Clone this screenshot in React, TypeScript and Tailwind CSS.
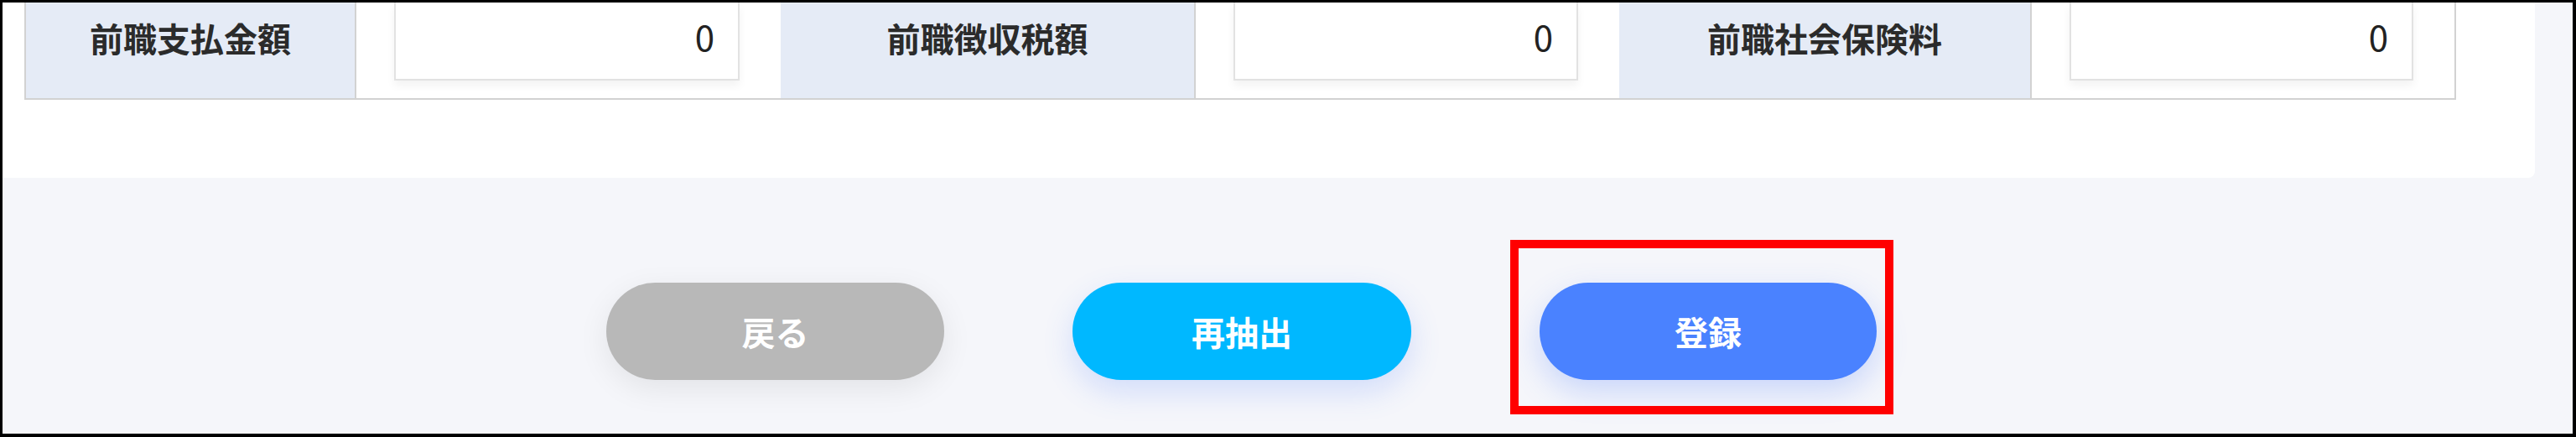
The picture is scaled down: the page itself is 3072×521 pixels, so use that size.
import React from 'react';

const FONT = "font-['Noto_Sans_CJK_JP',sans-serif]";

const rows = [
  { label: '前職支払金額', value: '0' },
  { label: '前職徴収税額', value: '0' },
  { label: '前職社会保険料', value: '0' },
];

const LabelCell: React.FC<{ text: string; first?: boolean }> = ({ text, first }) => (
  <div
    className={`h-full bg-[#e5ebf6] flex justify-center pt-[17px] border-r-2 border-[#d2d2d2] ${
      first ? 'border-l-2' : ''
    }`}
  >
    <span className="text-[40px] leading-[50px] font-bold text-[#2b2b2b]">{text}</span>
  </div>
);

const ValueCell: React.FC<{ value: string; last?: boolean }> = ({ value, last }) => (
  <div className={`h-full bg-white pl-[45px] pr-[49px] ${last ? 'border-r-2 border-[#d2d2d2]' : ''}`}>
    <div className="h-[93px] bg-white border-x-2 border-b-2 border-[#e2e2e2] shadow-[0_6px_10px_rgba(0,0,0,0.05)] flex justify-end pt-[12px] pr-[28px]">
      <span className="text-[42px] leading-[56px] text-[#222]">{value}</span>
    </div>
  </div>
);

export default function App() {
  return (
    <div
      className={`w-full h-[521px] overflow-hidden bg-[#f5f6fa] border-l-[3px] border-t-[3px] border-r-4 border-b-4 border-black flex flex-col ${FONT}`}
    >
      {/* card (top cropped) */}
      <div className="h-[209px] mr-[45px] bg-white rounded-br-lg pl-[26px] shrink-0">
        <div className="w-[2900px] h-[116px] grid grid-cols-[396px_506px_495px_505px_492px_506px] border-b-2 border-[#d2d2d2]">
          {rows.map((r, i) => (
            <React.Fragment key={r.label}>
              <LabelCell text={r.label} first={i === 0} />
              <ValueCell value={r.value} last={i === rows.length - 1} />
            </React.Fragment>
          ))}
        </div>
      </div>

      {/* buttons */}
      <div className="flex items-start gap-[153px] pl-[720px] pt-[125px]">
        <button className="w-[403px] h-[116px] rounded-full bg-[#b8b8b8] text-white text-[40px] font-bold shadow-[0_10px_36px_rgba(0,0,0,0.08)]">
          戻る
        </button>
        <button className="w-[404px] h-[116px] rounded-full bg-[#00b8ff] text-white text-[40px] font-bold shadow-[0_14px_36px_rgba(70,120,255,0.2)]">
          再抽出
        </button>
        <div className="relative">
          <button className="w-[402px] h-[116px] rounded-full bg-[#4a82ff] text-white text-[40px] font-bold shadow-[0_14px_36px_rgba(70,120,255,0.25)]">
            登録
          </button>
          <div className="absolute -left-[35px] -right-[20px] -top-[51px] -bottom-[41px] border-[10px] border-[#ff0000] pointer-events-none" />
        </div>
      </div>
    </div>
  );
}
